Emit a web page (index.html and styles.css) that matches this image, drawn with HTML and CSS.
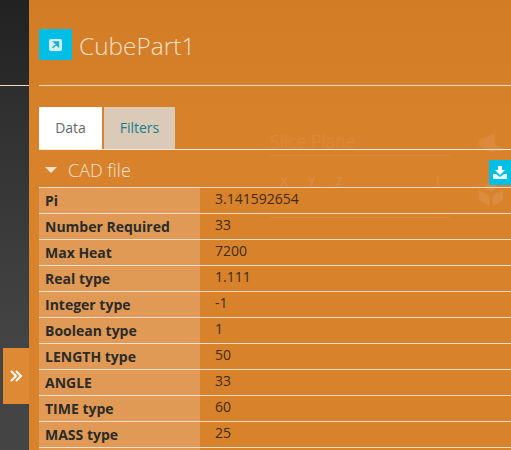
FILE: index.html
```html
<!DOCTYPE html>
<html lang="en">
<head>
  <meta charset="UTF-8">
  <title>CubePart1</title>
  <link rel="stylesheet" href="styles.css">
</head>
<body>
  <div class="strip"></div>

  <button class="expand">
    <svg width="12" height="12" viewBox="0 0 12 12"><path d="M1 1l5 5-5 5M6 1l5 5-5 5" fill="none" stroke="#fff" stroke-width="2"/></svg>
  </button>

  <div class="panel">
    <div class="ghost">
      <div class="ghost-title">Slice Plane</div>
      <div class="ghost-axes"><span>X</span><span>Y</span><span>Z</span><span class="ghost-i">I</span></div>
      <div class="ghost-rule"></div>
      <svg class="ghost-icon ghost-icon-a" width="28" height="23" viewBox="0 0 30 24"><path d="M1 7l17-7v21l-8-2-9-6z" fill="#da8a3a"/><path d="M12 14l6-3 11 7-6 2z" fill="#da8a3a"/></svg>
      <svg class="ghost-icon ghost-icon-b" width="26" height="26" viewBox="0 0 26 26"><path d="M13 0l-7 7 7 5 7-5zM1 10l10 5v11L1 20zM25 10l-10 5v11l10-6z" fill="#dc8c3e"/></svg>
    </div>

    <div class="header">
      <div class="header-icon">
        <svg width="13" height="12" viewBox="0 0 13 12"><rect width="13" height="12" rx="2" fill="#d5eef5"/><path d="M3.500 9l5-5M5 3h4.500v4.500z" fill="#16b1d4" stroke="#16b1d4" stroke-width="1.400"/></svg>
      </div>
      <h1>CubePart1</h1>
    </div>

    <div class="tabs">
      <div class="tab active">Data</div>
      <div class="tab">Filters</div>
    </div>

    <div class="section-title"><span class="arrow"></span>CAD file</div>

    <table class="props">
      <tr><th>Pi</th><td>3.141592654</td></tr>
      <tr><th>Number Required</th><td>33</td></tr>
      <tr><th>Max Heat</th><td>7200</td></tr>
      <tr><th>Real type</th><td>1.111</td></tr>
      <tr><th>Integer type</th><td>-1</td></tr>
      <tr><th>Boolean type</th><td>1</td></tr>
      <tr><th>LENGTH type</th><td>50</td></tr>
      <tr><th>ANGLE</th><td>33</td></tr>
      <tr><th>TIME type</th><td>60</td></tr>
      <tr><th>MASS type</th><td>25</td></tr>
      <tr><th></th><td></td></tr>
    </table>

    <button class="download">
      <svg width="14" height="13" viewBox="0 0 14 13"><path d="M5 0h4v4h3L7 9 2 4h3z" fill="#fff"/><path d="M0 8h3l4 3 4-3h3v5H0z" fill="#e4f6fa"/></svg>
    </button>
  </div>
</body>
</html>
```

FILE: styles.css
```css
html, body { margin: 0; height: 100%; overflow: hidden; }
body { font-family: "Open Sans", "Noto Sans", sans-serif; background: #444; position: relative; }

.strip { position: absolute; left: 0; top: 0; bottom: 0; width: 29px; background: linear-gradient(#222 0, #2a2a2a 85px, #2e2e2e 86px, #444 340px); }
.strip::after { content: ""; position: absolute; left: 0; right: 0; top: 85px; height: 1px; background: #f0dcc6; }

.expand { position: absolute; left: 3px; top: 348px; width: 26px; height: 56px; padding: 0; border: none; background: #de8a35; display: flex; align-items: center; justify-content: center; z-index: 1; }

.panel { position: absolute; left: 29px; right: 0; top: 0; bottom: 0; background: linear-gradient(#d27c26, #d8822c 150px); overflow: hidden; }

/* scene behind the panel, showing through faintly */
.ghost { position: absolute; left: 0; top: 0; right: 0; bottom: 0; }
.ghost-title { position: absolute; left: 241px; top: 128px; width: 180px; height: 27px; border-bottom: 1px solid #dc8b3b; color: #dc8b3b; font-size: 18px; font-weight: 300; line-height: 27px; }
.ghost-axes { position: absolute; left: 251px; top: 176px; width: 160px; display: flex; gap: 20px; color: #dc8b3b; font-size: 12px; line-height: 12px; font-weight: 700; }
.ghost-i { margin-left: auto; }
.ghost-rule { position: absolute; left: 241px; top: 217px; width: 180px; height: 1px; background: #dc8b3b; }
.ghost-icon { position: absolute; left: 449px; }
.ghost-icon-a { top: 133px; }
.ghost-icon-b { top: 180px; }

.header { height: 85px; display: flex; align-items: center; padding: 5px 0 0 10px; box-sizing: border-box; }
.header-icon { width: 33px; height: 31px; background: #00bfe6; display: flex; align-items: center; justify-content: center; margin-top: -1px; }
h1 { margin: 0 0 0 7px; font-size: 24.4px; font-weight: 300; color: #f2e0cd; }

.tabs { position: relative; margin-left: 10px; border-top: 1px solid #f0dcc6; padding-top: 21px; display: flex; gap: 2px; border-bottom: 1px solid #f5e9dc; }
.tab { width: 71px; height: 42px; line-height: 42px; text-align: center; font-size: 14px; color: #14808f; background: #dbcab8; }
.tab.active { width: 63px; color: #666; background: #fff; }

.section-title { position: relative; margin-left: 10px; height: 37px; padding: 2px 0 0 6px; box-sizing: border-box; font-size: 18px; font-weight: 300; color: #f3e3d2; display: flex; align-items: center; }
.arrow { width: 0; height: 0; border: 6px solid transparent; border-top: 6px solid #f3e3d2; border-bottom: 0; margin-right: 11px; }

.props { position: relative; margin-left: 10px; width: 472px; border-collapse: collapse; font-size: 14px; color: #2b2b2b; }
.props th, .props td { height: 25px; padding: 0 6px; border-top: 1px solid #f3dfc9; text-align: left; }
.props th { width: 149px; background: #e09a55; font-weight: 700; }
.props td { padding: 0 6px 0 15px; line-height: 22px; vertical-align: top; font-size: 14px; color: #3f2c18; }

.download { position: absolute; right: 0; top: 160px; width: 22px; height: 25px; padding: 0; border: none; background: #00bfe6; display: flex; align-items: center; justify-content: center; }
```
